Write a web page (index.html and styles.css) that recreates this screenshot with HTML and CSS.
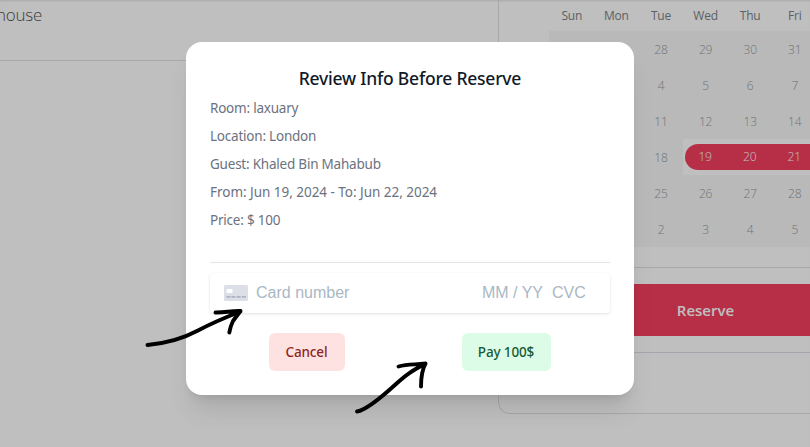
FILE: index.html
```html
<!DOCTYPE html>
<html lang="en">
<head>
<meta charset="utf-8">
<title>Reserve room</title>
<link rel="stylesheet" href="styles.css">
</head>
<body>
<main class="page">
  <section class="details">
    <div class="host"><span>house</span></div>
  </section>
  <aside class="booking">
    <div class="calendar">
      <div class="week names"><span>Sun</span><span>Mon</span><span>Tue</span><span>Wed</span><span>Thu</span><span>Fri</span></div>
      <div class="week"><span>26</span><span>27</span><span>28</span><span>29</span><span>30</span><span>31</span></div>
      <div class="week"><span>2</span><span>3</span><span>4</span><span>5</span><span>6</span><span>7</span></div>
      <div class="week"><span>9</span><span>10</span><span>11</span><span>12</span><span>13</span><span>14</span></div>
      <div class="week"><span>16</span><span>17</span><span>18</span><span class="in start"><b>19</b></span><span class="in"><b>20</b></span><span class="in"><b>21</b></span></div>
      <div class="week"><span>23</span><span>24</span><span>25</span><span>26</span><span>27</span><span>28</span></div>
      <div class="week"><span>30</span><span>1</span><span>2</span><span>3</span><span>4</span><span>5</span></div>
    </div>
    <hr class="rule">
    <button class="reserve"><span>Reserve</span></button>
    <hr class="rule cool">
  </aside>
</main>
<div class="backdrop">
  <div class="modal">
    <h3><span>Review Info Before Reserve</span></h3>
    <p>Room: laxuary</p>
    <p>Location: London</p>
    <p>Guest: Khaled Bin Mahabub</p>
    <p class="dates">From: Jun 19, 2024 - To: Jun 22, 2024</p>
    <p>Price: $ 100</p>
    <hr class="divider">
    <div class="card-input">
      <svg width="24" height="16" viewBox="0 0 24 16">
        <rect width="24" height="16" rx="1.5" fill="#dcdfe8"/>
        <rect x="2.500" y="4" width="6" height="4" rx=".8" fill="#fff"/>
        <path d="M2.500 11.800h4m1 0h4m1.200 0h4m1.200 0h4" stroke="#aeb4c1" stroke-width="1.800"/>
      </svg>
      <span class="number">Card number</span>
      <span class="expiry">MM / YY</span>
      <span class="cvc">CVC</span>
    </div>
    <div class="actions">
      <button class="cancel">Cancel</button>
      <button class="pay">Pay 100$</button>
    </div>
  </div>
</div>
<svg class="arrows" width="810" height="447" viewBox="0 0 810 447">
  <path d="M147.500 345C164 343.500 184 338 198 330.500S224 318 240.500 311.500M215.500 312.500C224 312.800 232 310.600 240.500 311L233 321C231 325 230 329 229.300 332.500"/>
  <path d="M357 411.500C366 410 384 395 396 384S413 370.500 425.500 363.500M398.500 366.500C408 363.500 416 365 425.500 363.500C422 370 421 378 421 386.500"/>
</svg>
</body>
</html>
```

FILE: styles.css
```css
* { box-sizing: border-box; }
body {
  margin: 0;
  width: 810px;
  height: 447px;
  overflow: hidden;
  background: #fff;
  font-family: "Noto Sans", "Open Sans", sans-serif;
}
button { border: 0; font-family: inherit; padding: 0; }
hr { margin: 0; border: 0; height: 1px; }

.page { display: grid; grid-template-columns: 498px 364px; height: 447px; overflow: hidden; box-shadow: inset 0 2px 2px -1px rgba(0,0,0,.12); }
.host { height: 61px; border-bottom: 1px solid #e1e1e4; padding-top: 3px; display: flex; }
.host span { margin-left: -4px; font-family: "Open Sans", sans-serif; font-size: 17px; line-height: 24px; font-weight: 300; color: #525252; letter-spacing: -.25px; }

.booking { height: 414px; border: 1px solid #e0e0e3; border-top: 0; border-radius: 0 0 12px 12px; }
.calendar { margin-left: 50px; width: 312px; font-family: "Open Sans", sans-serif; }
.week { display: grid; grid-template-columns: repeat(6, 44.6px); height: 36px; background: #f7f7f7; }
.week span { display: flex; align-items: center; justify-content: center; font-size: 12px; font-weight: 300; color: #949a9e; letter-spacing: -.2px; padding-left: 1px; }
.week.names { height: 31px; background: none; }
.week.names span { color: #7b8287; font-weight: 400; }
.week .in { background: #fff; padding: 0; }
.week b { flex: 1; height: 26px; line-height: 26px; text-align: center; background: #f43f5e; color: #fff; font-weight: 300; }
.week .start b { margin-left: 2px; border-radius: 13px 0 0 13px; padding-right: 2px; }
.rule { background: #e1e1e4; margin-top: 20px; }
.rule.cool { background: #dddde8; margin-top: 16px; }
.reserve { display: block; margin-top: 16px; width: 362px; height: 52px; padding-left: 51px; background: #f43f5e; color: #fff; font: 600 15px "Open Sans", sans-serif; text-align: center; }

.backdrop { position: absolute; inset: 0; background: rgba(0,0,0,.25); }
.modal {
  margin: 42px 0 0 186px;
  width: 448px;
  height: 353px;
  padding: 24px;
  border-radius: 16px;
  background: #fff;
  box-shadow: 0 20px 25px -5px rgba(0,0,0,.1), 0 8px 10px -6px rgba(0,0,0,.1);
}
.modal h3 { margin: 0; text-align: center; font-size: 17.500px; line-height: 24px; font-weight: 500; color: #111827; letter-spacing: -.22px; }
.modal p { margin: 8px 0 0; font-size: 13.500px; line-height: 20px; color: #6b7280; letter-spacing: -.22px; }
.modal .dates { letter-spacing: -.03px; }
.divider { background: #e5e5e5; margin-top: 32px; }
.card-input {
  display: flex;
  align-items: center;
  height: 40px;
  margin-top: 10px;
  padding: 0 24.200px 0 14px;
  border-radius: 4px;
  box-shadow: 0 1px 3px #dfe1e7;
  color: #aab7c4;
  font: 16px "Liberation Sans", sans-serif;
}
.number { margin-left: 8px; flex: 1; }
.cvc { margin-left: 9px; }
.actions { display: flex; justify-content: space-around; margin: 20px 1px 0 0; }
.actions button { height: 38px; border-radius: 6px; font-family: "Noto Sans", sans-serif; font-size: 13.500px; font-weight: 500; letter-spacing: -.15px; }
.cancel { width: 76px; background: #fee2e2; color: #8b2626; }
.pay { width: 89px; background: #dcfce7; color: #185a34; }

.arrows { position: absolute; left: 0; top: 0; fill: none; stroke: #000; stroke-width: 3.900; stroke-linecap: round; stroke-linejoin: round; }
```
